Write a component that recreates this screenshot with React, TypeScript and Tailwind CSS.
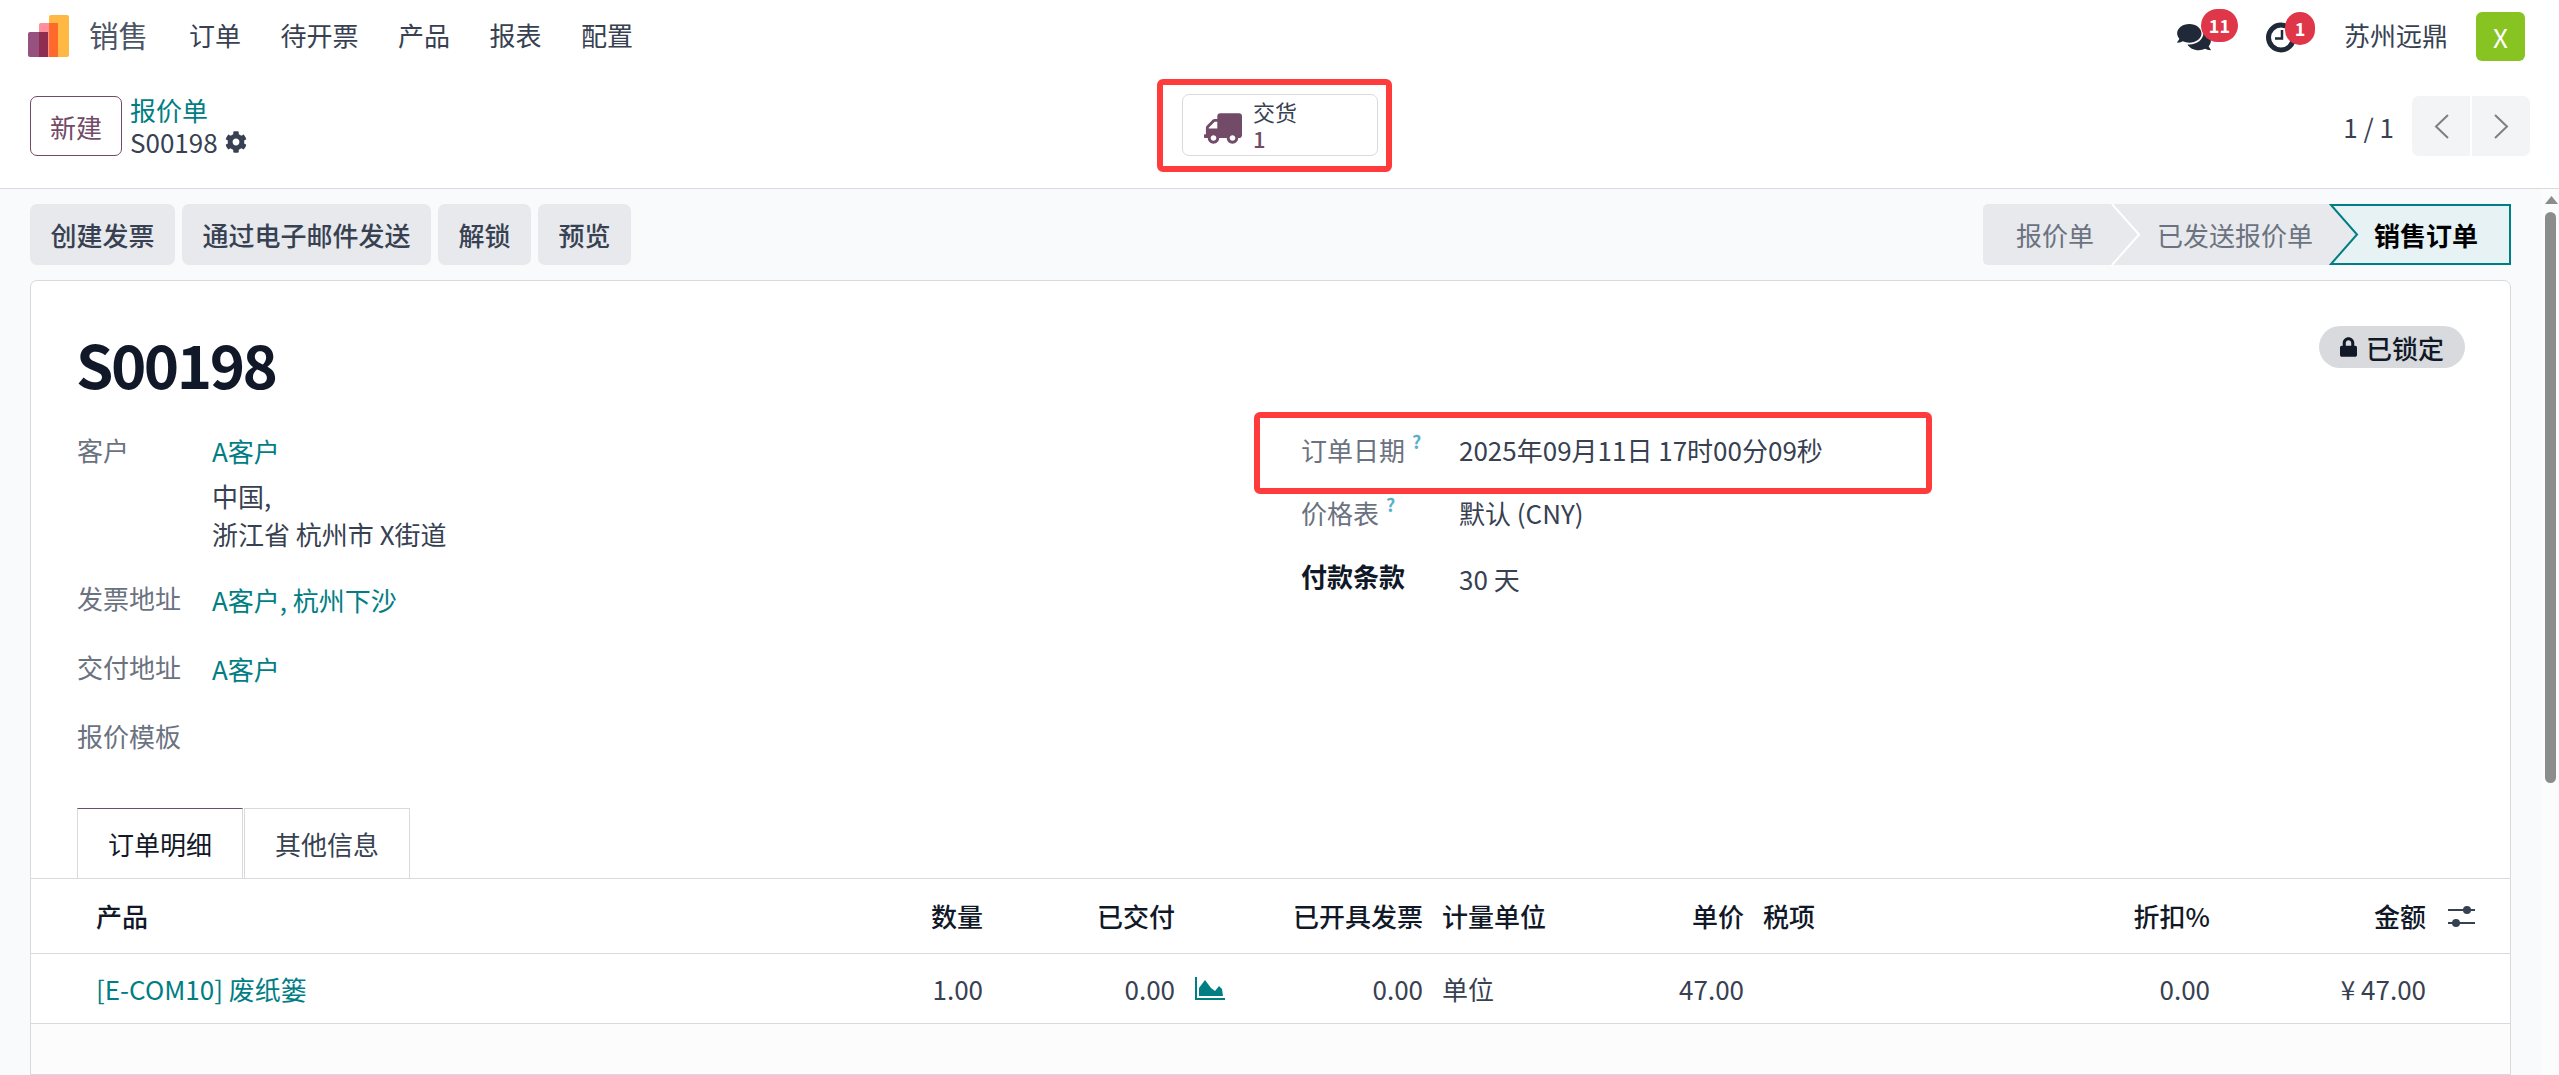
import { FaCog, FaComments, FaLock, FaTruck } from "react-icons/fa";

const navItems = ["订单", "待开票", "产品", "报表", "配置"];
const actions = ["创建发票", "通过电子邮件发送", "解锁", "预览"];
const link = "text-[#017e84]";

function Logo() {
  return (
    <svg viewBox="0 0 41 42" className="w-[41px] h-[42px] shrink-0">
      <rect x="21" y="0" width="20" height="42" rx="2" fill="#ffb843" />
      <rect x="11" y="8" width="19" height="34" rx="2" fill="#ff8f9a" />
      <path d="M21 8h9v34h-9z" fill="#ff6a2a" />
      <rect x="0" y="17" width="20" height="25" rx="2" fill="#96517f" />
      <path d="M11 17h9v25h-9z" fill="#8e2d4f" />
    </svg>
  );
}

function Help() {
  return <sup className="ml-[7px] text-[18px] font-bold text-[#5bb0c9] top-[-12px]">?</sup>;
}

function Chevron({ left }: { left?: boolean }) {
  return (
    <svg viewBox="0 0 15 25" className="w-[15px] h-[25px]" fill="none" stroke="#7f7f7f" strokeWidth="2">
      <path d={left ? "M14 1 2 12.5 14 24" : "M1 1l12 11.5L1 24"} />
    </svg>
  );
}

function Field({ label, children }: { label: string; children: React.ReactNode }) {
  return (
    <div className="grid grid-cols-[135px_1fr] mb-[25px]">
      <div className="leading-[40px] text-[#6b7280]">{label}</div>
      <div className="leading-[44px]">{children}</div>
    </div>
  );
}

export default function App() {
  return (
    <div className="relative h-screen overflow-hidden flex flex-col bg-white text-[26px] text-[#374151] font-['Noto_Sans_CJK_SC','Noto_Sans',sans-serif]">
      {/* top nav */}
      <header className="h-[72px] shrink-0 flex items-center pl-[28px] pr-[34px]">
        <Logo />
        <span className="ml-[20px] mr-[41px] mb-[3px] text-[29.5px] text-[#4b5563]">销售</span>
        <nav className="flex gap-[39.5px] mb-[3px]">
          {navItems.map((n) => (
            <span key={n}>{n}</span>
          ))}
        </nav>
        <div className="ml-auto flex items-center">
          <div className="relative mt-[2px]">
            <FaComments className="w-[34px] h-[30px] text-[#1f2937]" />
            <span className="absolute left-[24px] top-[-13px] w-[37px] h-[33px] rounded-full bg-[#e0364a] text-white text-[18px] font-bold flex items-center justify-center">
              11
            </span>
          </div>
          <div className="relative ml-[55px] mt-[2px]">
            <svg viewBox="0 0 30 31" className="w-[30px] h-[31px]" fill="none" stroke="#1f2937">
              <circle cx="15" cy="15.5" r="12.5" strokeWidth="5" />
              <path d="M16 8v8.5H9" strokeWidth="2.5" />
            </svg>
            <span className="absolute left-[19px] top-[-10px] w-[30px] h-[33px] rounded-full bg-[#e0364a] text-white text-[18px] font-bold flex items-center justify-center">
              1
            </span>
          </div>
          <span className="ml-[48px] mb-[3px]">苏州远鼎</span>
          <div className="ml-[28px] w-[49px] h-[49px] rounded-[6px] bg-[#88c421] text-white flex items-center justify-center">
            X
          </div>
        </div>
      </header>

      {/* control panel */}
      <div className="h-[117px] shrink-0 border-b border-[#d8dadd] grid grid-cols-[1152px_196px_1fr] items-start pl-[30px] pt-[22px]">
        <div className="flex items-center gap-[8px]">
          <button className="w-[92px] h-[60px] rounded-[7px] border border-[#714b67] text-[#714b67]">新建</button>
          <div className="leading-[32px]">
            <div className={link}>报价单</div>
            <div className="flex items-center gap-[7px]">
              S00198
              <FaCog className="w-[22px] h-[22px] text-[#374151]" />
            </div>
          </div>
        </div>
        <button className="h-[62px] rounded-[7px] border border-[#d8dadd] flex items-center pl-[21px] gap-[11px] text-left">
          <FaTruck className="w-[38px] h-[31px] text-[#714b67] -scale-x-100 mt-[6px]" />
          <span className="text-[22px] leading-[27px]">
            <span className="block">交货</span>
            <span className="block font-medium text-[#714b67]">1</span>
          </span>
        </button>
        <div className="flex items-center justify-end pr-[29px] pt-[2px]">
          <span className="mr-[18px]">1 / 1</span>
          <div className="flex gap-[2px]">
            <button className="w-[58px] h-[60px] rounded-l-[7px] bg-[#f3f4f6] flex items-center justify-center">
              <Chevron left />
            </button>
            <button className="w-[58px] h-[60px] rounded-r-[7px] bg-[#f3f4f6] flex items-center justify-center">
              <Chevron />
            </button>
          </div>
        </div>
      </div>

      {/* body */}
      <div className="flex-1 min-h-0 flex bg-[#f9fafb]">
        <main className="flex-1 min-w-0 flex flex-col px-[30px] pt-[15px]">
          <div className="flex justify-between shrink-0">
            <div className="flex gap-[7px]">
              {actions.map((a) => (
                <button key={a} className="h-[61px] px-[20.5px] rounded-[7px] bg-[#e7e9ed] font-medium">
                  {a}
                </button>
              ))}
            </div>
            <div className="flex h-[61px] rounded-[5px] bg-[#e7e9ed] text-[#6b7280]">
              <div className="relative w-[156px] pl-[33px] leading-[61px]">
                报价单
                <svg viewBox="0 0 29 61" className="absolute right-[-1px] top-0 w-[29px] h-[61px]" fill="none" stroke="#ffffff" strokeWidth="2">
                  <path d="M1 0l27 30.5L1 61" />
                </svg>
              </div>
              <div className="w-[190px] pl-[18px] leading-[61px]">已发送报价单</div>
              <div className="relative w-[182px] pl-[45px] leading-[61px] font-bold text-black">
                <svg viewBox="0 0 182 61" className="absolute inset-0 w-[182px] h-[61px]" fill="#e6f2f3" stroke="#017e84" strokeWidth="2">
                  <path d="M2 1h179v59H2l26-29.5z" />
                </svg>
                <span className="relative">销售订单</span>
              </div>
            </div>
          </div>

          {/* sheet */}
          <div className="mt-[15px] flex-1 flex flex-col rounded-t-[7px] border border-[#d8dadd] bg-white">
            <div className="pt-[45px] pl-[46px] pr-[45px] flex justify-between items-start">
              <h1 className="mt-[-1px] ml-[-1px] h-[76px] text-[60px] leading-[76px] font-semibold text-[#111827] tracking-[-2.5px]">S00198</h1>
              <span className="h-[42px] w-[146px] rounded-full bg-[#d8dadd] flex items-center justify-center gap-[9px] font-medium text-[#111827]">
                <FaLock className="w-[17px] h-[20px]" />
                已锁定
              </span>
            </div>

            <div className="mt-[29px] pl-[46px] grid grid-cols-[1224px_1fr]">
              <div>
                <Field label="客户">
                  <div className={`${link} leading-[42px]`}>A客户</div>
                  <div className="mt-[5px] leading-[38px]">中国,</div>
                  <div className="leading-[38px]">浙江省 杭州市 X街道</div>
                </Field>
                <Field label="发票地址">
                  <span className={link}>A客户, 杭州下沙</span>
                </Field>
                <Field label="交付地址">
                  <span className={link}>A客户</span>
                </Field>
                <div className="leading-[40px] text-[#6b7280]">报价模板</div>
              </div>
              <div className="grid grid-cols-[158px_1fr] content-start">
                <div className="leading-[40px] text-[#6b7280]">
                  订单日期
                  <Help />
                </div>
                <div className="leading-[40px]">2025年09月11日 17时00分09秒</div>
                <div className="mt-[21px] leading-[44px] text-[#6b7280]">
                  价格表
                  <Help />
                </div>
                <div className="mt-[21px] leading-[44px]">默认 (CNY)</div>
                <div className="mt-[22px] leading-[38px] font-bold text-[#111827]">付款条款</div>
                <div className="mt-[22px] leading-[44px]">30 天</div>
              </div>
            </div>

            {/* tabs */}
            <div className="mt-[52px] pl-[46px] h-[71px] flex gap-px border-b border-[#d8dadd] shrink-0">
              <div className="h-[70px] px-[30px] leading-[70px] border border-b-0 border-[#d8dadd] border-t-[#714b67] text-[#111827]">订单明细</div>
              <div className="h-[70px] px-[30px] leading-[70px] border border-b-0 border-[#d8dadd]">其他信息</div>
            </div>

            {/* order lines */}
            <div className="h-[75px] pb-[2px] pl-[65px] grid grid-cols-[604px_283px_192px_59px_189px_176px_145px_256px_210px_216px_1fr] items-center font-medium text-[#111827] border-b border-[#d8dadd] shrink-0">
              <div>产品</div>
              <div className="text-right">数量</div>
              <div className="text-right">已交付</div>
              <div />
              <div className="text-right">已开具发票</div>
              <div className="pl-[19px]">计量单位</div>
              <div className="text-right">单价</div>
              <div className="pl-[19px]">税项</div>
              <div className="text-right">折扣%</div>
              <div className="text-right">金额</div>
              <div className="pl-[22px] mt-[2px]">
                <svg viewBox="0 0 27 21" className="w-[27px] h-[21px]" fill="#374151">
                  <rect x="0" y="3" width="27" height="2" />
                  <circle cx="19" cy="4" r="4" />
                  <rect x="0" y="16" width="27" height="2" />
                  <circle cx="8" cy="17" r="4" />
                </svg>
              </div>
            </div>
            <div className="h-[70px] pl-[65px] grid grid-cols-[604px_283px_192px_59px_189px_176px_145px_256px_210px_216px_1fr] items-center border-b border-[#d8dadd] shrink-0">
              <div className={link}>[E-COM10] 废纸篓</div>
              <div className="text-right">1.00</div>
              <div className="text-right">0.00</div>
              <div className="pl-[20px]">
                <svg viewBox="0 0 30 23" className="w-[30px] h-[23px]" fill="#017e84">
                  <path d="M0 0h2v21h28v2H0z" />
                  <path d="M4 19V11l6-8 6 8 4 3 4-5 3 3 1 7z" />
                </svg>
              </div>
              <div className="text-right">0.00</div>
              <div className="pl-[19px]">单位</div>
              <div className="text-right">47.00</div>
              <div />
              <div className="text-right">0.00</div>
              <div className="text-right">¥ 47.00</div>
              <div />
            </div>
            <div className="flex-1 bg-[#fcfcfc]" />
          </div>
        </main>

        {/* scrollbar */}
        <div className="w-[18px] shrink-0 pt-[7px] pl-[4px] bg-[#fcfcfc]">
          <svg viewBox="0 0 13 8" className="w-[13px] h-[8px]" fill="#8c8c8c">
            <path d="M6.5 0 13 8H0z" />
          </svg>
          <div className="mt-[8px] w-[11px] h-[571px] rounded-full bg-[#8c8c8c]" />
        </div>
      </div>

      {/* red annotation boxes */}
      <div className="absolute left-[1157px] top-[79px] w-[235px] h-[93px] rounded-[6px] border-[6px] border-[#ff3b3b]" />
      <div className="absolute left-[1254px] top-[412px] w-[678px] h-[82px] rounded-[6px] border-[6px] border-[#ff3b3b]" />
    </div>
  );
}
